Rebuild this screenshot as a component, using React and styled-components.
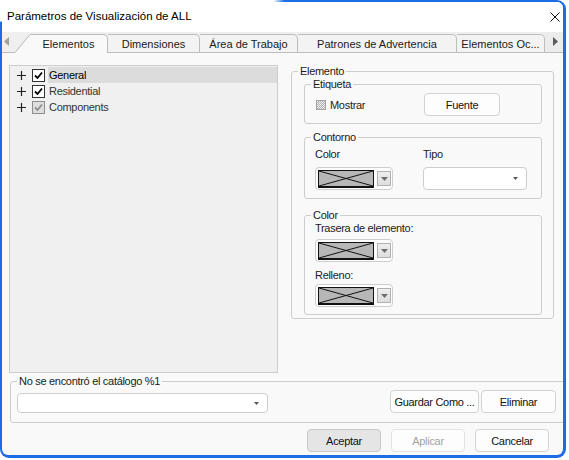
import React from 'react';
import styled, { createGlobalStyle } from 'styled-components';

const GlobalStyle = createGlobalStyle`
  html, body { margin: 0; padding: 0; background: #ffffff; }
  body { font-family: "Liberation Sans", Arial, sans-serif; }
  #root { width: 569px; height: 460px; }
`;

const FRAME_BLUE = '#1c6ce6';
const PAGE_BG = '#f9f9f9';
const LINE = '#cdcdcd';

/* ---------- window chrome ---------- */

// Blue frame; its top-left stretch fades to white like an unfocused edge.
const Frame = styled.div`
  box-sizing: border-box;
  width: 566px;
  height: 458px;
  padding: 2px 3px 3px 2px;
  border-radius: 0 9px 9px 9px;
  background:
    radial-gradient(ellipse 285px 22px at 0 0, #ffffff 96%, rgba(255, 255, 255, 0) 100%),
    ${FRAME_BLUE};
`;

const Dialog = styled.div`
  width: 100%;
  height: 100%;
  background: ${PAGE_BG};
  border-radius: 0 6px 6px 6px;
  display: flex;
  flex-direction: column;
  overflow: hidden;
  color: #1b1b1b;
`;

const TitleBar = styled.header`
  flex: none;
  height: 30px;
  background: #ffffff;
  display: flex;
  align-items: center;
  justify-content: space-between;
  padding: 0 3px 0 5px;
`;

const Title = styled.h1`
  margin: 0;
  font: normal 11.5px/1 "Liberation Sans", Arial, sans-serif;
  color: #000;
`;

const CloseIcon = () => (
  <svg width="10" height="10" viewBox="0 0 10 10" aria-hidden="true">
    <path d="M0.5 0.5 L9.5 9.5 M9.5 0.5 L0.5 9.5" stroke="#111" strokeWidth="1" fill="none" />
  </svg>
);

/* ---------- tabs ---------- */

const TabStrip = styled.div`
  flex: none;
  height: 21px;
  display: flex;
  align-items: flex-end;
  background: #efefef;
`;

const ScrollStub = styled.div`
  box-sizing: border-box;
  height: 21px;
  width: ${p => (p.$grow ? 'auto' : '13px')};
  flex: ${p => (p.$grow ? '1' : 'none')};
  border-bottom: 1px solid #bdbdbd;
  display: flex;
  align-items: center;
  justify-content: ${p => (p.$grow ? 'center' : 'flex-start')};
  padding: 0 0 2px 2px;
  background: ${p => (p.$grow ? '#ececec' : 'transparent')};
`;

const Slant = () => (
  <svg width="15" height="19" viewBox="0 0 15 19" style={{ flex: 'none', display: 'block' }} aria-hidden="true">
    <polygon points="0,19 15,0 15,19" fill={PAGE_BG} />
    <line x1="0" y1="18.5" x2="15" y2="0.5" stroke="#b7b7b7" strokeWidth="1" />
  </svg>
);

const Tab = styled.div`
  box-sizing: border-box;
  flex: none;
  width: ${p => p.$w}px;
  height: 19px;
  display: flex;
  align-items: center;
  justify-content: center;
  font-size: 11px;
  color: #1a1a1a;
  white-space: nowrap;
  border-top: 1px solid #bdbdbd;
  border-right: 1px solid #bdbdbd;
  border-top-right-radius: 5px;
  border-bottom: ${p => (p.$active ? 'none' : '1px solid #bdbdbd')};
  background: ${p => (p.$active ? PAGE_BG : '#f3f3f3')};
  padding-bottom: ${p => (p.$active ? '1px' : '0')};
`;

const Arrow = ({ dir, color }) => (
  <svg width="5" height="9" viewBox="0 0 5 9" aria-hidden="true">
    {dir === 'left'
      ? <polygon points="5,0 0,4.5 5,9" fill={color} />
      : <polygon points="0,0 5,4.5 0,9" fill={color} />}
  </svg>
);

/* ---------- tab page ---------- */

const TabPage = styled.section`
  flex: none;
  height: 322px;
  box-sizing: border-box;
  display: flex;
  align-items: flex-start;
  gap: 13px;
  padding: 12px 0 0 7px;
`;

const Tree = styled.ul`
  box-sizing: border-box;
  width: 269px;
  height: 308px;
  margin: 0;
  padding: 1px 0 0 0;
  list-style: none;
  background: #f0f0f0;
  border: 1px solid ${LINE};
`;

const TreeRow = styled.li`
  height: 16px;
  display: flex;
  align-items: center;
`;

const Expander = () => (
  <svg width="9" height="9" viewBox="0 0 9 9" style={{ marginLeft: 7, flex: 'none' }} aria-hidden="true">
    <path d="M0 4.5 H9 M4.5 0 V9" stroke="#222" strokeWidth="1.2" fill="none" />
  </svg>
);

const CheckBox = styled.span`
  box-sizing: border-box;
  flex: none;
  width: 13px;
  height: 13px;
  margin-left: 6px;
  border: 1px solid ${p => (p.$grayed ? '#8e8e8e' : '#333')};
  background: ${p => (p.$grayed ? '#dedede' : '#fff')};
  display: flex;
  align-items: center;
  justify-content: center;
`;

const CheckMark = ({ color }) => (
  <svg width="9" height="9" viewBox="0 0 9 9" aria-hidden="true">
    <path d="M1 4.5 L3.5 7 L8 1.5" stroke={color} strokeWidth="1.8" fill="none" />
  </svg>
);

const TreeLabel = styled.span`
  flex: 1;
  height: 16px;
  margin-left: 3px;
  padding-left: 1px;
  display: flex;
  align-items: center;
  font-size: 11px;
  letter-spacing: -0.3px;
  color: ${p => (p.$selected ? '#000' : '#333')};
  background: ${p => (p.$selected ? '#dcdcdc' : 'transparent')};
`;

/* ---------- group boxes ---------- */

const Group = styled.fieldset`
  box-sizing: border-box;
  min-width: 0;
  margin: ${p => p.$margin || '0'};
  width: ${p => (p.$w ? `${p.$w}px` : 'auto')};
  padding: ${p => `${p.$top || 0}px ${p.$right || 0}px ${p.$bottom || 0}px ${p.$left || 0}px`};
  border: 1px solid ${LINE};
  border-radius: 3px;
`;

// The legend sits 6px in from the group's left border whatever the group's padding.
const Legend = styled.legend`
  padding: 0 2px;
  margin-left: ${p => 6 - (p.$inset || 0)}px;
  font-size: 11px;
  line-height: 13px;
  letter-spacing: -0.3px;
  color: #1b1b1b;
`;

const TwoCol = styled.div`
  display: grid;
  grid-template-columns: 108px auto;
  align-items: center;
  row-gap: ${p => p.$rowGap || 0}px;
`;

const Stack = styled.div`
  display: flex;
  flex-direction: column;
  align-items: flex-start;
`;

const Caption = styled.span`
  font-size: 11px;
  line-height: 13px;
  letter-spacing: -0.3px;
  color: #1b1b1b;
  margin-top: ${p => p.$mt || 0}px;
`;

const CheckRow = styled.label`
  display: flex;
  align-items: center;
  gap: 4px;
  font-size: 11px;
  letter-spacing: -0.3px;
  color: #1b1b1b;
`;

const DottedBox = styled.span`
  box-sizing: border-box;
  width: 10px;
  height: 10px;
  border: 1px solid #a3a3a3;
  background: repeating-conic-gradient(#b4b4b4 0 25%, #ececec 0 50%) 0 0 / 2px 2px;
`;

const Button = styled.button`
  box-sizing: border-box;
  width: ${p => p.$w || 74}px;
  height: 23px;
  padding: 0;
  font: 11px "Liberation Sans", Arial, sans-serif;
  letter-spacing: -0.3px;
  white-space: nowrap;
  border-radius: 4px;
  border: 1px solid ${p => (p.$primary ? '#c9c9c9' : p.disabled ? '#e2e2e2' : '#d2d2d2')};
  background: ${p => (p.$primary ? '#e5e5e5' : '#fdfdfd')};
  color: ${p => (p.disabled ? '#a2a2a2' : '#111')};
`;

const ColorPicker = styled.div`
  box-sizing: border-box;
  width: 78px;
  height: 23px;
  margin-top: ${p => p.$mt || 0}px;
  border: 1px solid ${LINE};
  border-radius: 4px;
  background: #fdfdfd;
  display: flex;
  align-items: center;
  padding-left: 2px;
  gap: 3px;
`;

const Swatch = styled.span`
  box-sizing: border-box;
  width: 56px;
  height: 18px;
  border: 1px solid #111;
  border-bottom-width: 2px;
  background: #b7b7b7;
  display: block;
`;

const DropButton = styled.span`
  box-sizing: border-box;
  width: 14px;
  height: 15px;
  border: 1px solid #b2b2b2;
  background: linear-gradient(#eeeeee, #dedede);
  display: flex;
  align-items: center;
  justify-content: center;
`;

const DownArrow = ({ w = 7, h = 4, color = '#6e6e6e' }) => (
  <svg width={w} height={h} viewBox={`0 0 ${w} ${h}`} aria-hidden="true">
    <polygon points={`0,0 ${w},0 ${w / 2},${h}`} fill={color} />
  </svg>
);

const Picker = ({ mt }) => (
  <ColorPicker $mt={mt}>
    <Swatch>
      <svg width="54" height="15" viewBox="0 0 54 15" preserveAspectRatio="none" style={{ display: 'block' }} aria-hidden="true">
        <path d="M0 0 L54 15 M0 15 L54 0" stroke="#111" strokeWidth="1" fill="none" />
      </svg>
    </Swatch>
    <DropButton><DownArrow /></DropButton>
  </ColorPicker>
);

const Combo = styled.div`
  box-sizing: border-box;
  width: ${p => p.$w}px;
  height: ${p => p.$h}px;
  border: 1px solid ${LINE};
  border-radius: 4px;
  background: #ffffff;
  display: flex;
  align-items: center;
  justify-content: flex-end;
  padding-right: 8px;
`;

/* ---------- bottom area ---------- */

const CatalogRow = styled.div`
  display: flex;
  align-items: flex-end;
  justify-content: space-between;
`;

const ButtonPair = styled.div`
  display: flex;
  gap: 2px;
`;

const DialogButtons = styled.footer`
  display: flex;
  justify-content: flex-end;
  gap: 10px;
  margin-top: 6px;
  padding-right: 14px;
`;

const treeItems = [
  { name: 'General', selected: true },
  { name: 'Residential' },
  { name: 'Components', grayed: true },
];

const tabs = [
  { label: 'Elementos', w: 78, active: true },
  { label: 'Dimensiones', w: 92 },
  { label: 'Área de Trabajo', w: 98 },
  { label: 'Patrones de Advertencia', w: 159 },
  { label: 'Elementos Oc...', w: 88 },
];

export default function App() {
  return (
    <>
      <GlobalStyle />
      <Frame>
        <Dialog>
          <TitleBar>
            <Title>Parámetros de Visualización de ALL</Title>
            <CloseIcon />
          </TitleBar>

          <TabStrip>
            <ScrollStub><Arrow dir="left" color="#a0a0a0" /></ScrollStub>
            <Slant />
            {tabs.map(t => (
              <Tab key={t.label} $w={t.w} $active={t.active}>{t.label}</Tab>
            ))}
            <ScrollStub $grow><Arrow dir="right" color="#5a5a5a" /></ScrollStub>
          </TabStrip>

          <TabPage>
            <Tree>
              {treeItems.map(item => (
                <TreeRow key={item.name}>
                  <Expander />
                  <CheckBox $grayed={item.grayed}>
                    <CheckMark color={item.grayed ? '#8e8e8e' : '#000'} />
                  </CheckBox>
                  <TreeLabel $selected={item.selected}>{item.name}</TreeLabel>
                </TreeRow>
              ))}
            </Tree>

            <Group $w={263} $right={11} $bottom={3} $left={12}>
              <Legend $inset={12}>Elemento</Legend>

              <Group $top={2} $bottom={7} $left={11}>
                <Legend $inset={11}>Etiqueta</Legend>
                <TwoCol>
                  <CheckRow><DottedBox />Mostrar</CheckRow>
                  <Button $w={76} type="button">Fuente</Button>
                </TwoCol>
              </Group>

              <Group $margin="7px 0 0 0" $top={4} $bottom={8} $left={10}>
                <Legend $inset={10}>Contorno</Legend>
                <TwoCol $rowGap={6}>
                  <Caption>Color</Caption>
                  <Caption>Tipo</Caption>
                  <Picker />
                  <Combo $w={104} $h={23}><DownArrow w={5} h={3} color="#555" /></Combo>
                </TwoCol>
              </Group>

              <Group $margin="10px 0 0 0" $bottom={7} $left={10}>
                <Legend $inset={10}>Color</Legend>
                <Stack>
                  <Caption>Trasera de elemento:</Caption>
                  <Picker mt={4} />
                  <Caption $mt={7}>Relleno:</Caption>
                  <Picker mt={2} />
                </Stack>
              </Group>
            </Group>
          </TabPage>

          <Group $margin="0 -6px 0 8px" $top={2} $right={12} $bottom={9} $left={6}>
            <Legend $inset={6}>No se encontró el catálogo %1</Legend>
            <CatalogRow>
              <Combo $w={251} $h={20}><DownArrow w={5} h={3} color="#555" /></Combo>
              <ButtonPair>
                <Button $w={89} type="button">Guardar Como ...</Button>
                <Button $w={75} type="button">Eliminar</Button>
              </ButtonPair>
            </CatalogRow>
          </Group>

          <DialogButtons>
            <Button $primary type="button">Aceptar</Button>
            <Button disabled type="button">Aplicar</Button>
            <Button type="button">Cancelar</Button>
          </DialogButtons>
        </Dialog>
      </Frame>
    </>
  );
}
